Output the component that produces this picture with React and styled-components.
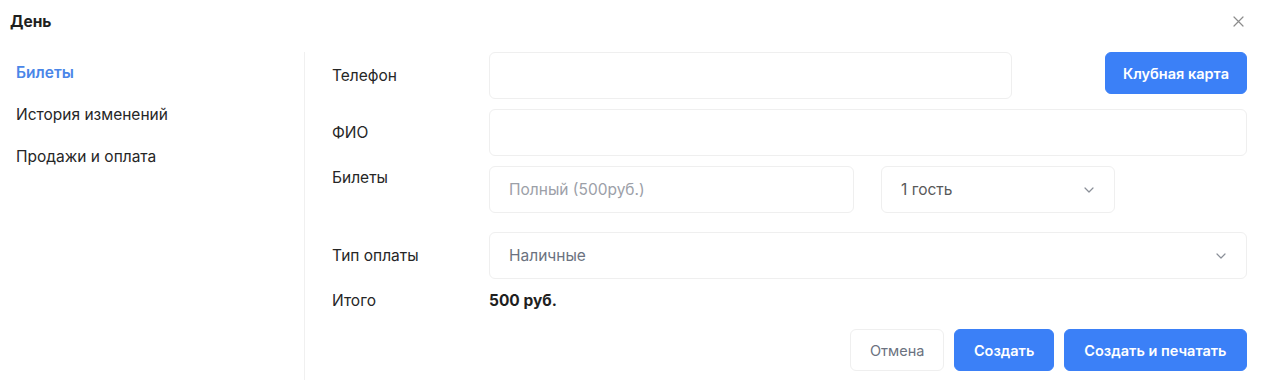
import React from "react";
import styled, { createGlobalStyle } from "styled-components";

const Global = createGlobalStyle`
  html, body { margin: 0; padding: 0; background: #fff; }
  body { font-family: Inter, "Noto Sans", sans-serif; color: #222; }
  * { box-sizing: border-box; }
`;

const Dialog = styled.div`
  width: 1266px;
  height: 388px;
  display: flex;
  flex-direction: column;
  background: #fff;
`;

const Header = styled.div`
  height: 42px;
  display: flex;
  align-items: center;
  justify-content: space-between;
  padding: 0 22px 0 10px;
`;

const Title = styled.div`
  font-size: 15.5px;
  font-weight: 700;
  color: #1f1f1f;
`;

const CloseBtn = styled.button`
  border: 0;
  background: none;
  padding: 0;
  width: 12px;
  height: 12px;
  display: flex;
  align-items: center;
  justify-content: center;
  cursor: pointer;
`;

const Body = styled.div`
  display: flex;
  margin-top: 10px;
  flex: 1;
  min-height: 0;
`;

const Sidebar = styled.nav`
  width: 305px;
  flex-shrink: 0;
  border-right: 1px solid #f0f0f0;
  margin-bottom: 8px;
  display: flex;
  flex-direction: column;
`;

const NavItem = styled.div`
  height: 42px;
  display: flex;
  align-items: center;
  padding-left: 16px;
  font-size: 15.5px;
  margin-top: ${(p) => (p.$first ? "-1px" : "0")};
  font-weight: ${(p) => (p.$active ? 600 : 400)};
  color: ${(p) => (p.$active ? "#4a86e8" : "#262626")};
`;

const Main = styled.div`
  flex: 1;
  padding: 0 19px 0 27px;
  display: flex;
  flex-direction: column;
`;

const Row = styled.div`
  display: flex;
  align-items: ${(p) => (p.$top ? "flex-start" : "center")};
  margin-bottom: ${(p) => p.$mb || 0}px;
`;

const Label = styled.div`
  width: 157px;
  flex-shrink: 0;
  font-size: 15.5px;
  color: #262626;
  padding-top: ${(p) => (p.$top ? "2px" : "0")};
`;

const Field = styled.div`
  flex: ${(p) => (p.$w ? "0 0 auto" : 1)};
  width: ${(p) => (p.$w ? `${p.$w}px` : "auto")};
  height: 47px;
  border: 1px solid #efefef;
  border-radius: 6px;
  display: flex;
  align-items: center;
  justify-content: space-between;
  padding: 0 20px 0 19px;
  font-size: 15.5px;
  color: ${(p) => p.$color || "#262626"};
  background: #fff;
`;

const Spacer = styled.div`
  width: ${(p) => p.$w}px;
  flex-shrink: 0;
`;

const Button = styled.button`
  height: 42px;
  border-radius: 6px;
  font-family: Inter, "Noto Sans", sans-serif;
  font-size: 14.5px;
  font-weight: ${(p) => (p.$ghost ? 400 : 600)};
  padding: 0 ${(p) => p.$px || 19}px;
  border: 1px solid ${(p) => (p.$ghost ? "#efefef" : "#3b80f7")};
  background: ${(p) => (p.$ghost ? "#fff" : "#3b80f7")};
  color: ${(p) => (p.$ghost ? "#6b7280" : "#fff")};
  align-self: ${(p) => (p.$top ? "flex-start" : "auto")};
  cursor: pointer;
`;

const Total = styled.div`
  font-size: 15.5px;
  font-weight: 700;
  color: #1f1f1f;
`;

const Actions = styled.div`
  display: flex;
  justify-content: flex-end;
  gap: 10px;
`;

const Chevron = () => (
  <svg width="10" height="6" viewBox="0 0 10 6" fill="none">
    <path d="M1 1l4 4 4-4" stroke="#8a8f98" strokeWidth="1.2" strokeLinecap="round" strokeLinejoin="round" />
  </svg>
);

export default function App() {
  return (
    <>
      <Global />
      <Dialog>
        <Header>
          <Title>День</Title>
          <CloseBtn aria-label="close">
            <svg width="11" height="11" viewBox="0 0 11 11">
              <path d="M1 1l9 9M10 1l-9 9" stroke="#8c8c8c" strokeWidth="1.2" strokeLinecap="round" />
            </svg>
          </CloseBtn>
        </Header>
        <Body>
          <Sidebar>
            <NavItem $active $first>Билеты</NavItem>
            <NavItem>История изменений</NavItem>
            <NavItem>Продажи и оплата</NavItem>
          </Sidebar>
          <Main>
            <Row $mb={10}>
              <Label>Телефон</Label>
              <Field />
              <Spacer $w={93} />
              <Button $top $px={17}>Клубная карта</Button>
            </Row>
            <Row $mb={10}>
              <Label>ФИО</Label>
              <Field />
            </Row>
            <Row $top $mb={19}>
              <Label $top>Билеты</Label>
              <Field $w={365} $color="#9ca0a8">Полный (500руб.)</Field>
              <Spacer $w={27} />
              <Field $w={234} $color="#595959">
                1 гость
                <Chevron />
              </Field>
            </Row>
            <Row $mb={12}>
              <Label>Тип оплаты</Label>
              <Field $color="#6b7280">
                Наличные
                <Chevron />
              </Field>
            </Row>
            <Row $mb={19}>
              <Label>Итого</Label>
              <Total>500 руб.</Total>
            </Row>
            <Actions>
              <Button $ghost $px={19}>Отмена</Button>
              <Button $px={18.5}>Создать</Button>
              <Button $px={19.5}>Создать и печатать</Button>
            </Actions>
          </Main>
        </Body>
      </Dialog>
    </>
  );
}
